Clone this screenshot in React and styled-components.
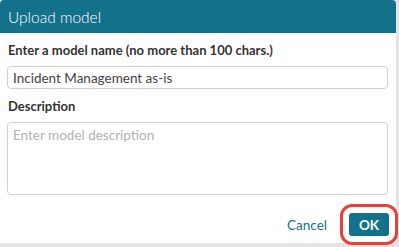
import React from 'react'
import styled, { createGlobalStyle } from 'styled-components'

const Global = createGlobalStyle`
    html, body {
        margin: 0;
        padding: 0;
        background: #e4e4e4;
        width: 399px;
        height: 247px;
        overflow: hidden;
    }
    * {
        box-sizing: border-box;
    }
`

const Dialog = styled.div`
    width: 396px;
    height: 243px;
    background: #fff;
    border-radius: 4px 4px 0 0;
    display: flex;
    flex-direction: column;
    font-family: Lato, 'Liberation Sans', sans-serif;
`

const Header = styled.div`
    height: 33px;
    background: #14718b;
    border-radius: 4px 4px 0 0;
    display: flex;
    align-items: center;
    padding: 0 8px;
    color: #fff;
    font-size: 15.5px;
    font-weight: 300;
`

const Body = styled.div`
    padding: 9px 8px 0 7px;
    display: flex;
    flex-direction: column;
`

const Label = styled.label`
    font-size: 13px;
    font-weight: 700;
    color: #333;
    line-height: 16px;
    margin: 0 0 8px 1px;
`

const Input = styled.input`
    width: 381px;
    height: 23px;
    border: 1px solid #cfcfcf;
    border-radius: 4px;
    padding: 0 5px;
    font-family: inherit;
    font-size: 13.5px;
    color: #444;
    margin-bottom: 9px;
    outline: none;
`

const TextArea = styled.textarea`
    width: 381px;
    height: 73px;
    border: 1px solid #cfcfcf;
    border-radius: 4px;
    padding: 4px 5px;
    font-family: inherit;
    font-size: 13.5px;
    color: #444;
    resize: none;
    outline: none;
    &::placeholder {
        color: #b3b3b3;
    }
`

const Footer = styled.div`
    display: flex;
    justify-content: flex-end;
    align-items: center;
    gap: 22px;
    padding: 18px 7px 0 0;
`

const TextButton = styled.button`
    background: none;
    border: none;
    padding: 0;
    font-family: inherit;
    font-size: 13.5px;
    color: #14718b;
    cursor: pointer;
`

const PrimaryButton = styled.button`
    width: 40px;
    height: 23px;
    background: #14718b;
    border: none;
    border-radius: 3px;
    color: #fff;
    font-family: inherit;
    font-size: 13.5px;
    font-weight: 700;
    cursor: pointer;
    outline: 3.5px solid ${props => props.highlight ? '#e8403a' : 'transparent'};
    outline-offset: 6px;
`

const App = () => {
    return (
        <>
            <Global/>
            <Dialog>
                <Header>Upload model</Header>
                <Body>
                    <Label>Enter a model name (no more than 100 chars.)</Label>
                    <Input defaultValue="Incident Management as-is"/>
                    <Label>Description</Label>
                    <TextArea placeholder="Enter model description"/>
                </Body>
                <Footer>
                    <TextButton>Cancel</TextButton>
                    <PrimaryButton highlight>OK</PrimaryButton>
                </Footer>
            </Dialog>
        </>
    )
}

export default App
